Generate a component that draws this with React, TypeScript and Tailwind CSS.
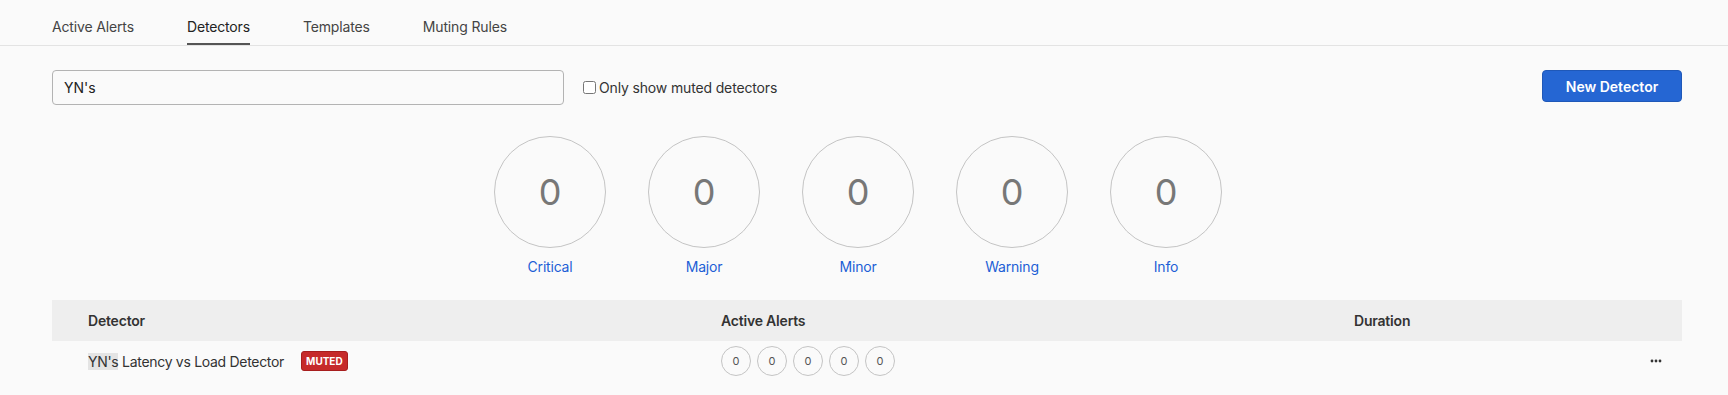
import React from 'react'

const tabs = ['Active Alerts', 'Detectors', 'Templates', 'Muting Rules']
const severities = ['Critical', 'Major', 'Minor', 'Warning', 'Info']

/**
 * 重要度ごとの件数サークル
 */
function SeverityCircle({ label, count }: { label: string; count: number }) {
  return (
    <div className="flex flex-col items-center w-[112px]">
      <div className="w-[112px] h-[112px] rounded-full border border-[#c4c4c4] flex items-center justify-center">
        <span className="text-[36px] leading-none text-[#777777]">{count}</span>
      </div>
      <a className="mt-[9px] text-[14px] leading-[20px] text-[#1d5fd6] tracking-[-0.2px] cursor-pointer">{label}</a>
    </div>
  )
}

export default function App() {
  return (
    <div
      className="min-h-[395px] bg-[#fafafa] text-[#333333]"
      style={{ fontFamily: 'Inter, "Liberation Sans", sans-serif' }}
    >
      {/* タブ */}
      <div className="h-[46px] border-b border-[#e3e3e3] pl-[52px] flex items-end gap-[53px]">
        {tabs.map((tab) => {
          const active = tab === 'Detectors'
          return (
            <div
              key={tab}
              className={`h-[45px] flex items-center text-[14px] tracking-[-0.15px] border-b-2 ${
                active ? 'border-[#555555] text-[#222222]' : 'border-transparent text-[#444444]'
              }`}
            >
              <span className="pt-[10px]">{tab}</span>
            </div>
          )
        })}
      </div>

      <div className="pl-[52px] pr-[46px]">
        {/* 検索バー */}
        <div className="mt-[24px] flex items-start">
          <input
            defaultValue="YN's"
            className="w-[512px] h-[35px] px-[11px] text-[14px] text-[#222222] bg-[#fafafa] border border-[#b3b3b3] rounded-[4px] outline-none"
          />
          <label className="ml-[19px] h-[35px] flex items-center gap-[3px] text-[14px] tracking-[-0.15px] text-[#333333]">
            <input type="checkbox" className="w-[13px] h-[13px] m-0" />
            Only show muted detectors
          </label>
          <button className="ml-auto w-[140px] h-[32px] rounded-[4px] bg-[#2566d3] border border-[#1f58b8] text-white text-[14px] font-semibold">
            New Detector
          </button>
        </div>

        {/* 重要度サークル */}
        <div className="mt-[31px] flex justify-center gap-[42px] pr-[18px]">
          {severities.map((s) => (
            <SeverityCircle key={s} label={s} count={0} />
          ))}
        </div>

        {/* テーブル */}
        <div className="mt-[23px]">
          <div className="h-[41px] bg-[#eeeeee] grid grid-cols-[633px_633px_1fr] items-center text-[14px] font-semibold text-[#333333] tracking-[-0.2px]">
            <div className="pl-[36px]">Detector</div>
            <div className="pl-[36px]">Active Alerts</div>
            <div className="pl-[36px]">Duration</div>
          </div>
          <div className="h-[40px] grid grid-cols-[633px_633px_1fr] items-center text-[14px]">
            <div className="pl-[36px] flex items-center">
              <span className="text-[#333333] tracking-[-0.3px]">
                <span className="bg-[#e4e4e4]">YN's</span> Latency vs Load Detector
              </span>
              <span className="ml-[17px] h-[20px] px-[4px] flex items-center rounded-[3px] bg-[#c62a2a] border border-[#a71e1e] text-white text-[10px] font-bold">
                MUTED
              </span>
            </div>
            <div className="pl-[36px] flex items-center gap-[6px]">
              {[0, 1, 2, 3, 4].map((i) => (
                <div
                  key={i}
                  className="w-[30px] h-[30px] rounded-full border border-[#c4c4c4] flex items-center justify-center text-[11px] text-[#555555]"
                >
                  0
                </div>
              ))}
            </div>
            <div className="flex justify-end pr-[20px]">
              <svg width="12" height="4" viewBox="0 0 12 4" fill="#333333">
                <circle cx="2" cy="2" r="1.4" />
                <circle cx="6" cy="2" r="1.4" />
                <circle cx="10" cy="2" r="1.4" />
              </svg>
            </div>
          </div>
        </div>
      </div>
    </div>
  )
}
